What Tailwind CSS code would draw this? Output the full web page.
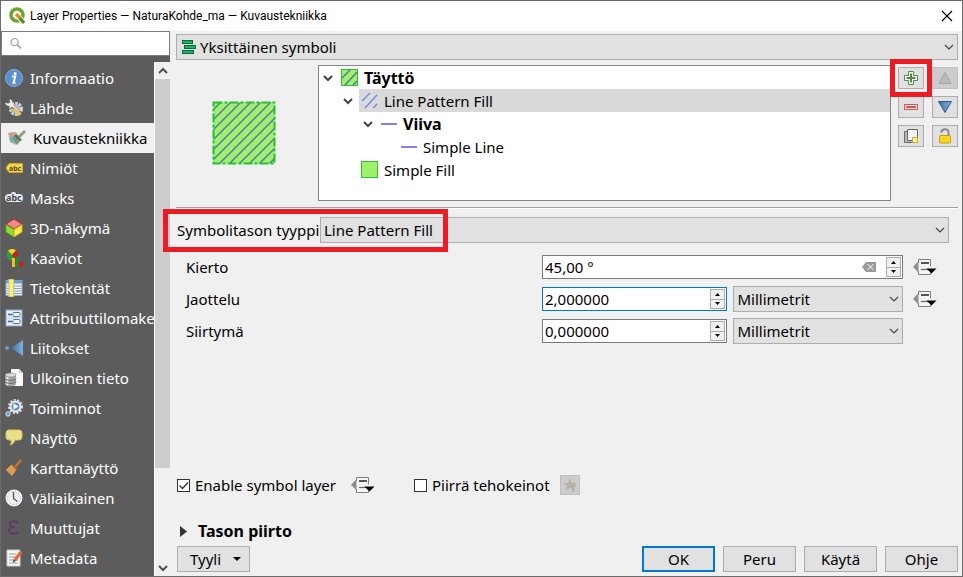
<!DOCTYPE html>
<html lang="fi">
<head>
<meta charset="utf-8">
<title>Layer Properties — NaturaKohde_ma — Kuvaustekniikka</title>
<script src="https://cdn.jsdelivr.net/npm/@tailwindcss/browser@4"></script>
</head>
<body class="bg-[#6b6b6b]">
<svg class="absolute size-0" aria-hidden="true">
  <defs>
    <symbol id="chev" viewBox="0 0 10 10"><path d="M1 3l4 4 4-4" fill="none" stroke="currentColor" stroke-width="1.2"/></symbol>
    <symbol id="chevb" viewBox="0 0 10 10"><path d="M1 3l4 4 4-4" fill="none" stroke="currentColor" stroke-width="2"/></symbol>
    <symbol id="override" viewBox="0 0 24 18">
      <path d="M6.500 1.500h11.500v15H6.500v-3L1 9l5.500-4.500z" fill="#f4f4f4"/>
      <path d="M5.500 3v11.500L0 9z" fill="#8a8d91"/>
      <path d="M5.500 5V1.500h12v7M5.500 13v3.500h12v-3" fill="none" stroke="#808080"/>
      <path d="M8 5h8" stroke="#555" stroke-width="2"/><path d="M8 11.500h8" stroke="#666" stroke-width="1.200"/>
      <path d="M13.500 10.500h10l-5 5z" fill="#000"/>
    </symbol>
    <pattern id="hatch" width="10" height="10" patternUnits="userSpaceOnUse"><path d="M-2 12L12-2M-2 2L2-2M8 12l4-4" stroke="#4672ae" stroke-width="1.300"/></pattern>
    <linearGradient id="blue" x1="0" x2="1"><stop offset="0" stop-color="#3f6ea5"/><stop offset="1" stop-color="#7fb0e0"/></linearGradient>
  </defs>
</svg>
<div class="flex h-screen flex-col border border-[#6b6b6b] bg-[#f0f0f0] font-['Noto_Sans','Open_Sans',sans-serif] text-[15px] leading-5 text-black">
  <header class="flex h-[30px] shrink-0 items-center bg-white pr-[9px] pl-2 font-[Roboto,sans-serif] text-[12px]">
    <svg class="mr-[3px] size-[18px]" viewBox="0 0 18 18"><circle cx="8" cy="8" r="6" fill="none" stroke="#6aa52f" stroke-width="3.600"/><path d="M8 8l7.500 8.500" stroke="#fff" stroke-width="5"/><path d="M10 10l5 6" stroke="#4f8f25" stroke-width="3.400"/><path d="M7 7l4 4" stroke="#ee8b1f" stroke-width="3.400"/></svg>
    <h1>Layer Properties — NaturaKohde_ma — Kuvaustekniikka</h1>
    <button class="ml-auto" aria-label="Sulje"><svg class="size-3" viewBox="0 0 12 12"><path d="M1 1l10 10M11 1L1 11" stroke="#000" stroke-width="1.200"/></svg></button>
  </header>

  <div class="flex min-h-0 flex-1">
    <aside class="flex w-[169px] shrink-0 flex-col bg-[#5c5c5c]">
      <label class="flex h-[25px] shrink-0 items-center border border-[#7a7a7a] bg-white px-2">
        <svg class="size-[13px]" viewBox="0 0 13 13"><circle cx="5" cy="5" r="4" fill="none" stroke="#999" stroke-width="1.200"/><path d="M8 8l4 4" stroke="#999" stroke-width="1.600"/></svg>
        <input class="w-full min-w-0 px-1 outline-none" type="search" aria-label="Haku">
      </label>
      <div class="flex min-h-0 flex-1 pt-1.5">
        <nav class="min-w-0 flex-1 overflow-hidden pt-px text-white">
          <a href="#" class="flex h-[30px] items-center gap-[7px] pl-1 whitespace-nowrap">
            <svg class="size-[18px] shrink-0" viewBox="0 0 18 18"><circle cx="9" cy="9" r="8.500" fill="#5b8fd0" stroke="#83aee0"/><circle cx="10.200" cy="4.500" r="1.500" fill="#fff"/><path d="M7 7.500h3.300L8.500 13.800h2" fill="none" stroke="#fff" stroke-width="1.900"/></svg>
            <span>Informaatio</span></a>
          <a href="#" class="flex h-[30px] items-center gap-[7px] pl-1 whitespace-nowrap">
            <svg class="size-[18px] shrink-0" viewBox="0 0 18 18"><circle cx="11" cy="10" r="5.500" fill="none" stroke="#d6d8dc" stroke-width="3" stroke-dasharray="2.500 1"/><circle cx="11" cy="10" r="4.500" fill="#b5b9c0"/><path d="M4 4l9 9" stroke="#f1f1f1" stroke-width="2.400"/><path d="M1 4a3 3 0 005 1 3 3 0 00-1-4" fill="none" stroke="#eee" stroke-width="2"/><path d="M8 9l7 7" stroke="#e8c35e" stroke-width="3.600"/><path d="M6 8l3 2" stroke="#555"/></svg>
            <span>Lähde</span></a>
          <a href="#" aria-current="page" class="flex h-[30px] items-center gap-[7px] bg-[#f0f0f0] pl-[7px] whitespace-nowrap text-black">
            <svg class="size-[18px] shrink-0" viewBox="0 0 18 18"><path d="M0 4l8-1 4 6-4 7-6-3z" fill="#9bc49a"/><path d="M0 4l7-1-3 6z" fill="#e0938c"/><path d="M1 9l6-2 2 7-6-1z" fill="#86a4d0"/><path d="M8 6l5 5-4 5-5-7z" fill="#7d9a78"/><path d="M8 5l6 6-2 1-6-5z" fill="#5f6b5d"/><path d="M11 8l6-6" stroke="#9b8f7d" stroke-width="2.600"/></svg>
            <span>Kuvaustekniikka</span></a>
          <a href="#" class="flex h-[30px] items-center gap-[7px] pl-1 whitespace-nowrap">
            <svg class="size-[18px] shrink-0" viewBox="0 0 18 18"><path d="M1 9l3-4.500h13.500v9H4z" fill="#f3d64a" stroke="#c9a92a"/><text x="4" y="11.500" font-size="7" font-weight="bold" fill="#5a4a10">abc</text></svg>
            <span>Nimiöt</span></a>
          <a href="#" class="flex h-[30px] items-center gap-[7px] pl-1 whitespace-nowrap">
            <svg class="size-[18px] shrink-0" viewBox="0 0 18 18"><rect x="0" y="5" width="18" height="8" rx="4" fill="#e6ebf7"/><rect x="6" y="3" width="5" height="6" rx="2" fill="#e6ebf7"/><text x="1" y="12" font-size="9" font-weight="bold" fill="#444">abc</text></svg>
            <span>Masks</span></a>
          <a href="#" class="flex h-[30px] items-center gap-[7px] pl-1 whitespace-nowrap">
            <svg class="size-[18px] shrink-0" viewBox="0 0 18 18" stroke-linejoin="round"><path d="M9 0l8 5-8 5-8-5z" fill="#ef8a8a" stroke="#c32020"/><path d="M1 5.500l8 5V18l-8-5z" fill="#8ce030" stroke="#5aa81c"/><path d="M17 5.500l-8 5V18l8-5z" fill="#fce94f" stroke="#c9ae1c"/></svg>
            <span>3D-näkymä</span></a>
          <a href="#" class="flex h-[30px] items-center gap-[7px] pl-1 whitespace-nowrap">
            <svg class="size-[18px] shrink-0" viewBox="0 0 18 18"><circle cx="7" cy="6" r="5.500" fill="#2d9a45"/><path d="M7 6L3 1.500a6 6 0 018 0z" fill="#f6d321"/><path d="M7 6l4-4.500a6 6 0 010 9z" fill="#d3191b"/><path d="M7 9h3v9H7z" fill="#f0c419"/><path d="M11 7h2.500v11H11z" fill="#1f8c3c"/><path d="M14.500 13H18v5h-3.500z" fill="#d3191b"/></svg>
            <span>Kaaviot</span></a>
          <a href="#" class="flex h-[30px] items-center gap-[7px] pl-1 whitespace-nowrap">
            <svg class="size-[18px] shrink-0" viewBox="0 0 18 18"><rect x="1" y="1.500" width="16" height="15" fill="#eef3f9" stroke="#87a9cd"/><path d="M1 3h16" stroke="#6f9bcb" stroke-width="3"/><path d="M2 7h14M2 9.500h14M2 12h14M2 14.500h14" stroke="#8aa0b8"/><rect x="4" y=".5" width="4.500" height="17" fill="#f5eda0" stroke="#e3cf3c"/></svg>
            <span>Tietokentät</span></a>
          <a href="#" class="flex h-[30px] items-center gap-[7px] pl-1 whitespace-nowrap">
            <svg class="size-[18px] shrink-0" viewBox="0 0 18 18"><rect x="1" y="1" width="16" height="16" fill="#e6edf6" stroke="#88a8cc"/><path d="M3 5.500h4M3 12.500h4" stroke="#4a6488" stroke-width="1.600"/><rect x="8" y="3.500" width="7" height="4" rx="1" fill="#fff" stroke="#4e78ad"/><rect x="8" y="10.500" width="7" height="4" rx="1" fill="#fff" stroke="#4e78ad"/><path d="M2 9h14" stroke="#b5c8de"/></svg>
            <span>Attribuuttilomake</span></a>
          <a href="#" class="flex h-[30px] items-center gap-[7px] pl-1 whitespace-nowrap">
            <svg class="size-[18px] shrink-0" viewBox="0 0 18 18"><circle cx="2" cy="9" r="2" fill="#6c9bd1"/><path d="M18 1v16L6 9z" fill="url(#blue)"/></svg>
            <span>Liitokset</span></a>
          <a href="#" class="flex h-[30px] items-center gap-[7px] pl-1 whitespace-nowrap">
            <svg class="size-[18px] shrink-0" viewBox="0 0 18 18"><path d="M6 0h8l4 4v13H6z" fill="#fafafa"/><path d="M14 0v4h4z" fill="#ccc"/><path d="M0 6v9c0 3 11 3 11 0V6z" fill="#a5a5a5"/><path d="M2.500 8v8" stroke="#eee" stroke-width="2"/><ellipse cx="5.500" cy="6" rx="5.500" ry="2" fill="#dcdcdc" stroke="#777" stroke-width=".6"/><path d="M0 9.500c1 2.500 10 2.500 11 0M0 12.500c1 2.500 10 2.500 11 0" fill="none" stroke="#666"/></svg>
            <span>Ulkoinen tieto</span></a>
          <a href="#" class="flex h-[30px] items-center gap-[7px] pl-1 whitespace-nowrap">
            <svg class="size-[18px] shrink-0" viewBox="0 0 18 18"><circle cx="10.500" cy="7.500" r="6.700" fill="none" stroke="#ececec" stroke-width="1.600" stroke-dasharray="2 1.700"/><circle cx="10.500" cy="7.500" r="5" fill="#5f8fca" stroke="#ececec" stroke-width="2"/><path d="M8.500 4.500v6l5-3z" fill="#fff"/><circle cx="3" cy="15" r="2.200" fill="#6c9bd1" stroke="#d8e2ee"/></svg>
            <span>Toiminnot</span></a>
          <a href="#" class="flex h-[30px] items-center gap-[7px] pl-1 whitespace-nowrap">
            <svg class="size-[18px] shrink-0" viewBox="0 0 18 18"><path d="M4 1h10q3 0 3 3v4q0 3-3 3h-4q-1 4-5 5 2-2 1-5H4q-3 0-3-3V4q0-3 3-3z" fill="#eadf8a" stroke="#d6c45c"/></svg>
            <span>Näyttö</span></a>
          <a href="#" class="flex h-[30px] items-center gap-[7px] pl-1 whitespace-nowrap">
            <svg class="size-[18px] shrink-0" viewBox="0 0 18 18"><path d="M10 8l6-7" stroke="#c77a2a" stroke-width="2"/><path d="M7 5l6 5-2 1-5-5z" fill="#b96b1e"/><path d="M6 6l5 5-4 6-6-6z" fill="#e3a55e"/><path d="M3 11l4 4M4.500 9l4 4" stroke="#c98538"/></svg>
            <span>Karttanäyttö</span></a>
          <a href="#" class="flex h-[30px] items-center gap-[7px] pl-1 whitespace-nowrap">
            <svg class="size-[18px] shrink-0" viewBox="0 0 18 18"><circle cx="9" cy="9" r="8" fill="#efefef" stroke="#fff"/><circle cx="9" cy="9" r="6.500" fill="none" stroke="#aaa" stroke-dasharray="1 2.400"/><path d="M8.500 3v6.500l4 3" fill="none" stroke="#555" stroke-width="1.300"/></svg>
            <span>Väliaikainen</span></a>
          <a href="#" class="flex h-[30px] items-center gap-[7px] pl-1 whitespace-nowrap">
            <svg class="size-[18px] shrink-0" viewBox="0 0 18 18"><path d="M13 4.500c0-3-8-3-8 .5 0 2.500 3 3 5 3-3 0-6 .8-6 3.500 0 4.500 9 4 9.500.5" fill="none" stroke="#653a6d" stroke-width="2"/></svg>
            <span>Muuttujat</span></a>
          <a href="#" class="flex h-[30px] items-center gap-[7px] pl-1 whitespace-nowrap">
            <svg class="size-[18px] shrink-0" viewBox="0 0 18 18"><path d="M2 1h13v16H2z" fill="#f7f7f7" stroke="#ccc"/><path d="M4 5h7M4 8h6M4 11h9M4 14h9" stroke="#999"/><path d="M10 11l6-8" stroke="#e06a33" stroke-width="3.400"/><path d="M8 13.500l.5-3 2.500 1.500z" fill="#333"/></svg>
            <span>Metadata</span></a>
        </nav>
        <div class="flex w-4 shrink-0 flex-col items-center border-l border-white bg-[#f0f0f0] text-[#505050]">
          <button class="flex h-[17px] w-full shrink-0 items-center justify-center" aria-label="Ylös"><svg class="size-[10px] rotate-180"><use href="#chevb"/></svg></button>
          <div class="w-full flex-1"><div class="h-[81%] w-full bg-[#cdcdcd]"></div></div>
          <button class="flex h-[17px] w-full shrink-0 items-center justify-center" aria-label="Alas"><svg class="size-[10px]"><use href="#chevb"/></svg></button>
        </div>
      </div>
    </aside>

    <main class="flex min-w-0 flex-1 flex-col pt-[3px] pr-1 pb-1 pl-1.5">
      <div class="relative grid h-[26px] shrink-0 items-center">
        <select aria-label="Symbolityyppi" class="h-full w-full appearance-none border border-[#adadad] bg-[#e1e1e1] pl-[23px] leading-5"><option>Yksittäinen symboli</option></select>
        <svg class="pointer-events-none absolute left-1.5 size-[14px]" viewBox="0 0 14 14" fill="#19b364" stroke="#0b6b38"><rect x=".5" y=".5" width="10" height="3"/><rect x="2.500" y="5.500" width="11" height="3"/><rect x=".5" y="10.500" width="11" height="3"/></svg>
        <svg class="pointer-events-none absolute right-1 size-[10px] text-[#444]"><use href="#chev"/></svg>
      </div>

      <section class="mt-[5px] flex shrink-0">
        <div class="flex w-[142px] items-center justify-center pr-1.5">
          <svg class="size-[64px]" viewBox="0 0 64 64"><path d="M1.500 1.500h61v61h-61z" fill="#a1ef6c"/><path d="M1.500 1.500h61v61h-61z" fill="url(#hatch)"/><path d="M1.500 1.500h61v61h-61z" fill="none" stroke="#21c42c" stroke-width="2" stroke-dasharray="9 2 3 2"/></svg>
        </div>
        <ul class="h-[136px] min-w-0 flex-1 border border-[#828790] bg-white whitespace-nowrap">
          <li class="flex h-[23px] items-center pl-1 text-base leading-5 font-bold"><svg class="mr-2 size-[10px] text-[#444]"><use href="#chevb"/></svg><svg class="mr-1.5 size-[17px]" viewBox="0 0 17 17"><rect x=".5" y=".5" width="16" height="16" fill="#a1ef6c" stroke="#2ec22e"/><path d="M1 9l8-8M4 16L16 3M12 16l4-4" stroke="#4672ae" stroke-width="1.300"/></svg>Täyttö</li>
          <li class="flex h-[23px] items-center pl-6"><svg class="mr-1.5 size-[10px] text-[#444]"><use href="#chevb"/></svg><span class="flex h-full flex-1 items-center bg-[#d9d9d9]"><svg class="mr-1.5 ml-0.5 size-[17px]" viewBox="0 0 17 17"><path d="M1 9l8-8M4 16L16 3M12 16l4-4" stroke="#6f84ee" stroke-width="1.300"/></svg>Line Pattern Fill</span></li>
          <li class="flex h-[23px] items-center pl-11 text-base leading-5 font-bold"><svg class="mr-2 size-[10px] text-[#444]"><use href="#chevb"/></svg><span class="mr-1.5 h-0.5 w-4 bg-[#8080f8]"></span>Viiva</li>
          <li class="flex h-[23px] items-center pl-[82px]"><span class="mr-1.5 h-0.5 w-4 bg-[#8080f8]"></span>Simple Line</li>
          <li class="flex h-[23px] items-center pl-[42px]"><span class="mr-1.5 size-[17px] border border-[#2ec22e] bg-[#a1ef6c]"></span>Simple Fill</li>
        </ul>
        <div class="grid shrink-0 grid-cols-[26px_26px] content-start gap-x-2 gap-y-[7px] pt-0.5 pl-[7px]">
          <div class="relative h-[22px]">
            <button aria-label="Lisää" class="flex size-full items-center justify-center border border-[#adadad] bg-[#e1e1e1]"><svg class="size-[14px]" viewBox="0 0 14 14"><path d="M4.500.5h5v4h4v5h-4v4h-5v-4h-4v-5h4z" fill="#fff" stroke="#4f8c4a"/><path d="M7 2.500v9M2.500 7h9" stroke="#4f8c4a" stroke-width="2"/></svg></button>
            <div class="pointer-events-none absolute -inset-x-2 -inset-y-2 border-5 border-[#ed1c24]"></div>
          </div>
          <button disabled aria-label="Siirrä ylös" class="flex h-[22px] items-center justify-center border border-[#bfbfbf] bg-[#cccccc]"><svg class="size-[14px]" viewBox="0 0 14 14"><path d="M7 1.500l6 11H1z" fill="#bbb" stroke="#a5a5a5"/></svg></button>
          <button aria-label="Poista" class="flex h-[22px] items-center justify-center border border-[#adadad] bg-[#e1e1e1]"><svg class="h-[6px] w-[14px]" viewBox="0 0 14 6"><rect x=".5" y=".5" width="13" height="5" fill="#fff" stroke="#ef4b4b"/><path d="M2 3h10" stroke="#ef4b4b" stroke-width="2"/></svg></button>
          <button aria-label="Siirrä alas" class="flex h-[22px] items-center justify-center border border-[#adadad] bg-[#e1e1e1]"><svg class="size-[14px]" viewBox="0 0 14 14"><path d="M.5 1.500h13l-6.500 11z" fill="url(#blue)" stroke="#35597f"/></svg></button>
          <button aria-label="Monista" class="flex h-[22px] items-center justify-center border border-[#adadad] bg-[#e1e1e1]"><svg class="size-[14px]" viewBox="0 0 14 14"><path d="M.5 2.500h9v11h-9z" fill="#bbb" stroke="#666"/><path d="M3.500.5h10v11h-10z" fill="#f3f3f3" stroke="#666"/><rect x="8.500" y="8.500" width="5" height="5" fill="#fff3a0" stroke="#d3a91b"/></svg></button>
          <button aria-label="Lukitse" class="flex h-[22px] items-center justify-center border border-[#adadad] bg-[#e1e1e1]"><svg class="h-4 w-[14px]" viewBox="0 0 14 16"><path d="M3 4.500C4 0 11 0 10.500 5v3" fill="none" stroke="#8a8a8a" stroke-width="2"/><rect x="1.500" y="7.500" width="11" height="7.500" rx="1" fill="#f4d91f" stroke="#c49a10"/></svg></button>
        </div>
      </section>

      <hr class="mt-1.5 h-0.5 shrink-0 border-t border-b border-t-[#a0a0a0] border-b-white">

      <div class="relative mt-2 mr-[9px] flex h-[26px] shrink-0 items-center">
        <label for="layertype" class="w-36 shrink-0 pl-px whitespace-nowrap">Symbolitason tyyppi</label>
        <select id="layertype" class="h-full min-w-0 flex-1 appearance-none border border-[#adadad] bg-[#e1e1e1] pl-[3px]"><option>Line Pattern Fill</option></select>
        <svg class="pointer-events-none absolute right-1 size-[10px] text-[#444]"><use href="#chev"/></svg>
        <div class="pointer-events-none absolute -top-2 -left-[13px] h-[43px] w-[285px] border-5 border-[#ed1c24]"></div>
      </div>

      <div class="mt-[11px] grid shrink-0 auto-rows-[26px] grid-cols-[350px_minmax(0,186fr)_minmax(0,170fr)_28px] items-center gap-x-1.5 gap-y-1.5 pr-[21px] pl-2.5">
        <label for="rot">Kierto</label>
        <div class="col-span-2 flex h-6 items-center border border-[#7a7a7a] bg-white">
          <input id="rot" class="w-0 flex-1 pl-0.5 outline-none" value="45,00 °">
          <button aria-label="Tyhjennä" class="mr-2.5"><svg class="h-[10px] w-[14px]" viewBox="0 0 14 10"><path d="M4 0h10v10H4L0 5z" fill="#999"/><path d="M5.500 2l6 6M11.500 2l-6 6" stroke="#fff"/></svg></button>
          <div class="mr-px flex h-[20px] w-[15px] flex-col border border-[#adadad] bg-[#f0f0f0]"><button aria-label="Lisää kiertoa" class="flex flex-1 items-center justify-center border-b border-[#adadad]"><svg class="h-[3px] w-[5px]" viewBox="0 0 5 3"><path d="M0 3l2.500-3L5 3z"/></svg></button><button aria-label="Vähennä kiertoa" class="flex flex-1 items-center justify-center"><svg class="h-[3px] w-[5px]" viewBox="0 0 5 3"><path d="M0 0l2.500 3L5 0z"/></svg></button></div>
        </div>
        <button aria-label="Kierron ohitus" class="flex justify-end"><svg class="h-[18px] w-6"><use href="#override"/></svg></button>

        <label for="dist">Jaottelu</label>
        <div class="flex h-6 items-center border border-[#0078d7] bg-white">
          <input id="dist" class="w-0 flex-1 pl-0.5 outline-none" value="2,000000">
          <div class="mr-px flex h-[20px] w-[15px] flex-col border border-[#adadad] bg-[#f0f0f0]"><button aria-label="Lisää väliä" class="flex flex-1 items-center justify-center border-b border-[#adadad]"><svg class="h-[3px] w-[5px]" viewBox="0 0 5 3"><path d="M0 3l2.500-3L5 3z"/></svg></button><button aria-label="Vähennä väliä" class="flex flex-1 items-center justify-center"><svg class="h-[3px] w-[5px]" viewBox="0 0 5 3"><path d="M0 0l2.500 3L5 0z"/></svg></button></div>
        </div>
        <div class="relative flex h-[26px] items-center">
          <select aria-label="Jaottelun yksikkö" class="h-full w-full appearance-none border border-[#adadad] bg-[#e1e1e1] pl-[3px]"><option>Millimetrit</option></select>
          <svg class="pointer-events-none absolute right-1 size-[10px] text-[#444]"><use href="#chev"/></svg>
        </div>
        <button aria-label="Jaottelun ohitus" class="flex justify-end"><svg class="h-[18px] w-6"><use href="#override"/></svg></button>

        <label for="offs">Siirtymä</label>
        <div class="flex h-6 items-center border border-[#7a7a7a] bg-white">
          <input id="offs" class="w-0 flex-1 pl-0.5 outline-none" value="0,000000">
          <div class="mr-px flex h-[20px] w-[15px] flex-col border border-[#adadad] bg-[#f0f0f0]"><button aria-label="Lisää siirtymää" class="flex flex-1 items-center justify-center border-b border-[#adadad]"><svg class="h-[3px] w-[5px]" viewBox="0 0 5 3"><path d="M0 3l2.500-3L5 3z"/></svg></button><button aria-label="Vähennä siirtymää" class="flex flex-1 items-center justify-center"><svg class="h-[3px] w-[5px]" viewBox="0 0 5 3"><path d="M0 0l2.500 3L5 0z"/></svg></button></div>
        </div>
        <div class="relative flex h-[26px] items-center">
          <select aria-label="Siirtymän yksikkö" class="h-full w-full appearance-none border border-[#adadad] bg-[#e1e1e1] pl-[3px]"><option>Millimetrit</option></select>
          <svg class="pointer-events-none absolute right-1 size-[10px] text-[#444]"><use href="#chev"/></svg>
        </div>
      </div>

      <div class="mt-auto flex shrink-0 items-center pl-px">
        <label class="relative flex w-[174px] items-center gap-[5px] whitespace-nowrap"><input type="checkbox" checked class="size-[13px] appearance-none border border-[#333] bg-white"><svg class="pointer-events-none absolute left-0 size-[13px]" viewBox="0 0 13 13"><path d="M2.500 6.500l3 3 5.500-6" fill="none" stroke="#333" stroke-width="1.300"/></svg>Enable symbol layer</label>
        <button aria-label="Tason ohitus"><svg class="h-[18px] w-6"><use href="#override"/></svg></button>
        <label class="ml-[39px] flex w-[146px] items-center gap-[5px] whitespace-nowrap"><input type="checkbox" class="size-[13px] appearance-none border border-[#333] bg-white">Piirrä tehokeinot</label>
        <button disabled aria-label="Tehokeinot" class="flex size-5 items-center justify-center border border-[#bfbfbf] bg-[#cccccc]"><svg class="size-4" viewBox="0 0 16 16"><path d="M8 1l2 5h5l-4 3 2 5-5-3-5 3 2-5-4-3h5z" fill="#b5b3a8"/><path d="M11 15V9h3" fill="none" stroke="#a5a5a5"/></svg></button>
      </div>

      <details class="mt-6 shrink-0 pl-1 text-base leading-5 font-bold">
        <summary class="flex h-6 list-none items-center gap-2.5"><svg class="h-[11px] w-[8px]" viewBox="0 0 8 11"><path d="M0 0l7 5.500L0 11z" fill="#333"/></svg>Tason piirto</summary>
      </details>

      <footer class="mt-[3px] flex shrink-0 gap-2 pl-px">
        <button class="mr-auto flex h-[26px] w-[73px] items-center justify-center gap-3 border border-[#adadad] bg-[#e1e1e1] pl-1">Tyyli<svg class="h-1 w-2" viewBox="0 0 8 4"><path d="M0 0h8L4 4z"/></svg></button>
        <button class="h-[26px] w-[73px] border-2 border-[#0078d7] bg-[#e1e1e1]">OK</button>
        <button class="h-[26px] w-[73px] border border-[#adadad] bg-[#e1e1e1]">Peru</button>
        <button class="h-[26px] w-[73px] border border-[#adadad] bg-[#e1e1e1]">Käytä</button>
        <button class="h-[26px] w-[73px] border border-[#adadad] bg-[#e1e1e1]">Ohje</button>
      </footer>
    </main>
  </div>
</div>
</body>
</html>
